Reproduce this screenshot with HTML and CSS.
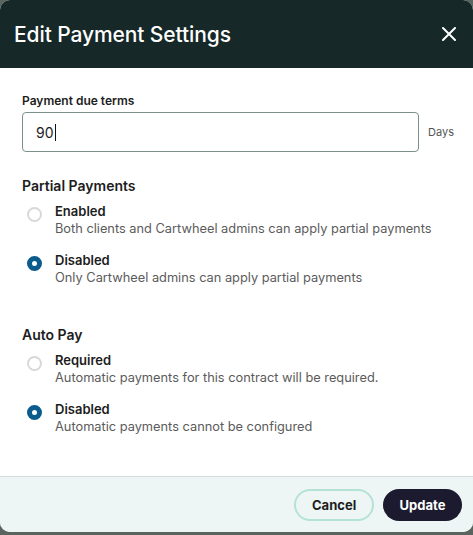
FILE: index.html
```html
<!DOCTYPE html>
<html>
<head>
<meta charset="utf-8">
<link rel="stylesheet" href="styles.css">
</head>
<body>
<div class="modal">
  <div class="header">
    <h1 class="title">Edit Payment Settings</h1>
    <svg class="close" width="14" height="14" viewBox="0 0 14 14"><path d="M1 1L13 13M13 1L1 13" stroke="#fff" stroke-width="2" stroke-linecap="round"/></svg>
  </div>
  <div class="body">
    <div class="field">
      <div class="label">Payment due terms</div>
      <div class="input-row">
        <div class="input"><span class="value">90</span><span class="caret"></span></div>
        <span class="suffix">Days</span>
      </div>
    </div>
    <div class="group">
      <div class="group-title">Partial Payments</div>
      <div class="option">
        <span class="radio"></span>
        <div class="opt-text"><div class="opt-title">Enabled</div><div class="opt-desc">Both clients and Cartwheel admins can apply partial payments</div></div>
      </div>
      <div class="option">
        <span class="radio checked"></span>
        <div class="opt-text"><div class="opt-title">Disabled</div><div class="opt-desc">Only Cartwheel admins can apply partial payments</div></div>
      </div>
    </div>
    <div class="group group2">
      <div class="group-title">Auto Pay</div>
      <div class="option">
        <span class="radio"></span>
        <div class="opt-text"><div class="opt-title">Required</div><div class="opt-desc">Automatic payments for this contract will be required.</div></div>
      </div>
      <div class="option">
        <span class="radio checked"></span>
        <div class="opt-text"><div class="opt-title">Disabled</div><div class="opt-desc">Automatic payments cannot be configured</div></div>
      </div>
    </div>
  </div>
  <div class="footer">
    <button class="btn cancel">Cancel</button>
    <button class="btn update">Update</button>
  </div>
</div>
</body>
</html>
```
FILE: styles.css
```css
html, body { margin: 0; padding: 0; }
body {
  background: #59645f;
  font-family: Inter, "Noto Sans", sans-serif;
  width: 473px;
  height: 535px;
  overflow: hidden;
}
.modal {
  width: 473px;
  height: 532px;
  border-radius: 10px;
  overflow: hidden;
  background: #fff;
  display: flex;
  flex-direction: column;
}
.header {
  background: #162828;
  height: 68px;
  display: flex;
  align-items: center;
  justify-content: space-between;
  padding: 0 17px 0 14px;
  box-sizing: border-box;
  flex: none;
}
.title {
  margin: 0;
  color: #fff;
  font-size: 21px;
  font-weight: 500;
  letter-spacing: -0.1px;
}
.close { display: block; }
.body {
  flex: 1;
  padding: 25px 22px 0 22px;
}
.label {
  font-size: 12px;
  font-weight: 600;
  color: #1d1d1d;
  margin-bottom: 4px;
}
.input-row {
  display: flex;
  align-items: center;
  gap: 9px;
}
.input {
  width: 397px;
  flex: none;
  height: 40px;
  box-sizing: border-box;
  border: 1px solid #7d8f8a;
  border-radius: 4px;
  display: flex;
  align-items: center;
  padding-left: 13px;
  font-size: 14px;
  color: #1d1d1d;
}
.caret {
  display: inline-block;
  width: 1px;
  height: 17px;
  background: #111;
  margin-left: 1px;
}
.suffix {
  font-size: 11px;
  color: #555;
}
.group { margin-top: 25px; }
.group2 { margin-top: 40px; }
.group-title {
  font-size: 14px;
  font-weight: 600;
  color: #1d1d1d;
  margin-bottom: 9px;
}
.option {
  display: flex;
  gap: 13px;
  padding-left: 5px;
  margin-bottom: 15px;
}
.radio {
  width: 15px;
  height: 15px;
  box-sizing: border-box;
  border-radius: 50%;
  border: 2px solid #d8d8dc;
  margin-top: 4px;
  flex: none;
}
.radio.checked {
  border: 5px solid #0b5b8c;
}
.opt-title {
  font-size: 13px;
  font-weight: 600;
  color: #1d1d1d;
  line-height: 17px;
}
.opt-desc {
  font-size: 12.8px;
  color: #5b5b5b;
  line-height: 17px;
}
.footer {
  height: 55px;
  flex: none;
  border-top: 1px solid #d6dcdb;
  background: #eef6f5;
  display: flex;
  align-items: center;
  justify-content: flex-end;
  gap: 9px;
  padding-right: 11px;
}
.btn {
  height: 32px;
  border-radius: 16px;
  font-family: inherit;
  font-size: 13px;
  font-weight: 700;
  padding: 0 16px;
  cursor: pointer;
}
.cancel {
  width: 80px;
  background: transparent;
  border: 2px solid #b4e2d5;
  color: #1d1d1d;
}
.update {
  width: 79px;
  background: #1c1a2e;
  border: none;
  color: #fff;
}
```
